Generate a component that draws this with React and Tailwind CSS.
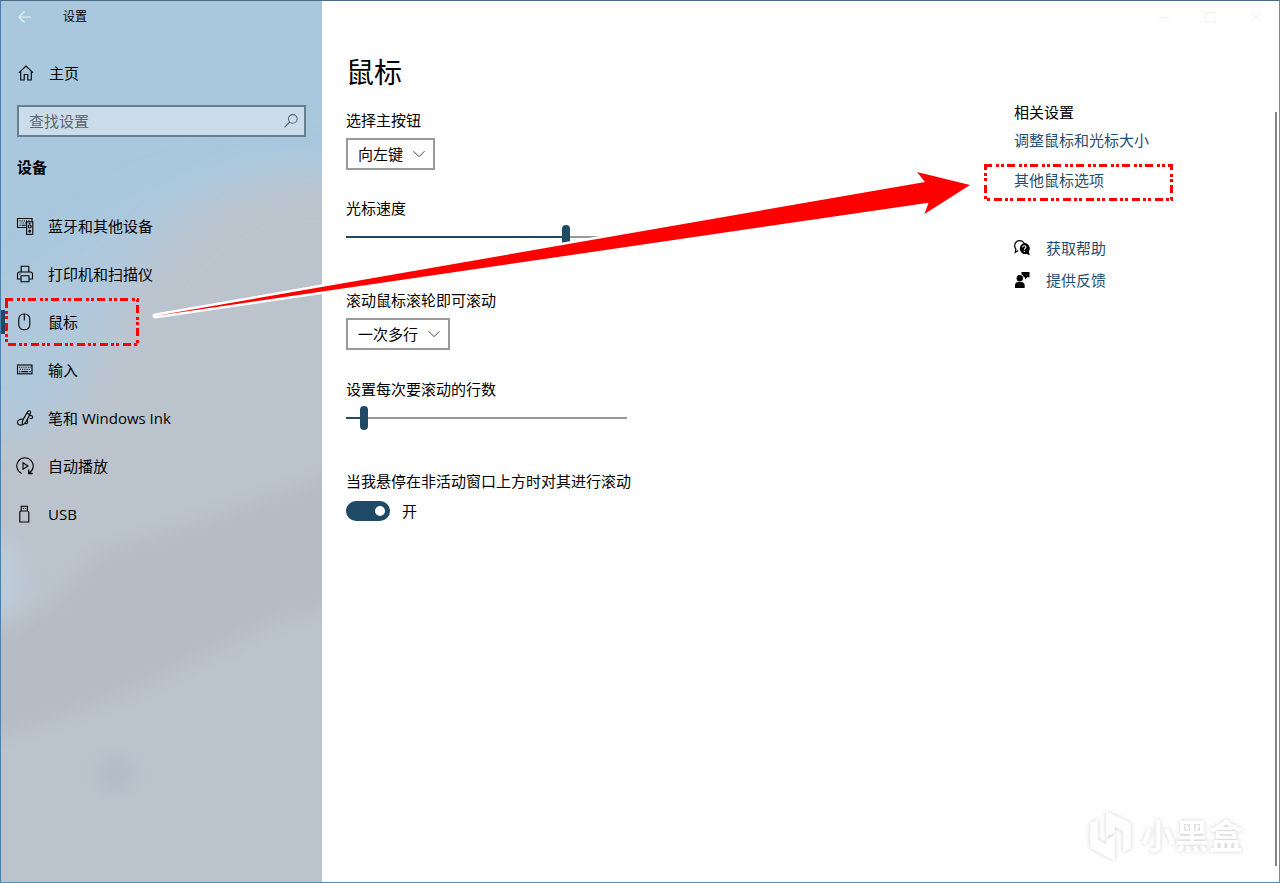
import { useState } from 'react';

const stroke = {
  fill: 'none',
  stroke: 'currentColor',
  strokeWidth: 1.1,
  viewBox: '0 0 18 18',
  className: 'h-[18px] w-[18px] shrink-0',
  'aria-hidden': true,
};

const HomeIcon = () => (
  <svg {...stroke}>
    <path d="M1.8 8.8 9 2l7.200 6.800M3.700 7.200V16h3.500v-5.500h3.600V16h3.500V7.200" />
  </svg>
);
const DevicesIcon = () => (
  <svg {...stroke}>
    <path d="M10.300 10.500H1.500V1.500H16v3" />
    <path d="M3.500 3.900h1M5.700 3.900h1M7.900 3.900h1M10.100 3.900h1M12.300 3.900h1M4.500 6h1M6.700 6h1M8.900 6h1M3.500 8.200h1.200M5.700 8.200h4" />
    <rect x="10.600" y="4.800" width="6.200" height="12.600" />
    <circle cx="13.700" cy="9.500" r="1.500" />
    <circle cx="13.700" cy="14.300" r=".9" />
    <path d="M12.800 6.600h1.800" />
  </svg>
);
const PrinterIcon = () => (
  <svg {...stroke}>
    <path d="M5.200 6.800V1.200h7.600v5.600M5 14H1.500V9.200c0-1.300.8-2.200 2.100-2.200h10.800c1.300 0 2.100.9 2.100 2.200V14H13" />
    <path d="M5 10.700h8v6.100H5zM3.400 9h1.200" />
  </svg>
);
const MouseIcon = () => (
  <svg {...stroke}>
    <rect x="2.800" y="1" width="11" height="15.800" rx="5" />
    <path d="M8.300 1v6.500" />
  </svg>
);
const KeyboardIcon = () => (
  <svg {...stroke}>
    <rect x="1.500" y="4" width="14.500" height="8.800" />
    <path d="M3 6.300h1M5.200 6.300h1M7.400 6.300h1M9.600 6.300h1M11.800 6.300h1M13.700 6.300h1M4 8.400h1M6.200 8.400h1M8.400 8.400h1M10.600 8.400h1M12.800 8.400h1M3 10.600h1.300M5.400 10.600h6.800M13.400 10.600h1.300" />
  </svg>
);
const PenIcon = () => (
  <svg {...stroke}>
    <path d="M6.400 15.800C5.900 13.500 6.500 11.600 7.600 9.600L11.600 2.700C12.400 1.300 14.800 1.500 14.600 3.300 14.300 5.400 10.300 12.300 9.300 13.700 8.500 14.800 7.400 15.500 6.400 15.800zM10.900 4 13.400 5.500" />
    <path d="M6.900 10.300C4.300 9.600 1.400 11 1.400 13.500c0 2.300 2.600 3.100 5 2.300M9.300 13.700c.3 1.500 1.700 1.300 2.200.1.500-1.300-.2-2.600 0-4M13 6.600c1.800-.4 3.900.4 3.700 1.800-.2 1.200-1.900 1.400-3 .9" />
  </svg>
);
const AutoPlayIcon = () => (
  <svg {...stroke}>
    <path d="M5.600 16.400A8.200 8.200 0 1 1 13 16.100" />
    <path d="M12.700 12.600v3.900h3.900" strokeWidth="1.300" />
    <path d="M7 5.800v6.400L12 9z" />
  </svg>
);
const UsbIcon = () => (
  <svg {...stroke}>
    <path d="M5.200 6V1.200h6.200V6M6.900 3.400h.9M8.900 3.400h.9" />
    <path d="M5 6h6.600c.7 0 1.200.5 1.200 1.200V17h-9V7.200C3.800 6.500 4.300 6 5 6z" />
  </svg>
);

const NAV = [
  { label: '蓝牙和其他设备', Icon: DevicesIcon },
  { label: '打印机和扫描仪', Icon: PrinterIcon },
  { label: '鼠标', Icon: MouseIcon, current: true },
  { label: '输入', Icon: KeyboardIcon },
  { label: '笔和 Windows Ink', Icon: PenIcon },
  { label: '自动播放', Icon: AutoPlayIcon },
  { label: 'USB', Icon: UsbIcon },
];

function Callout({ width, height, className }) {
  return (
    <svg className={`pointer-events-none absolute ${className}`} width={width} height={height} aria-hidden="true">
      <path
        d={`M0 1.500H${width - 1.5}V${height - 1.5}H1.500V0`}
        fill="none"
        stroke="#ff0000"
        strokeWidth="3"
        strokeDasharray="8 4 3 2 3 3"
      />
    </svg>
  );
}

function Wallpaper() {
  return (
    <svg className="absolute inset-0 h-full w-full" viewBox="0 0 322 883" preserveAspectRatio="none" aria-hidden="true">
      <defs>
        <filter id="soft" x="-150%" y="-150%" width="400%" height="400%">
          <feGaussianBlur stdDeviation="10" />
        </filter>
        <filter id="softer" x="-50%" y="-50%" width="200%" height="200%">
          <feGaussianBlur stdDeviation="18" />
        </filter>
      </defs>
      <rect width="322" height="883" fill="#a9c8dd" />
      <path d="M-60 330 60 260 150 200 240 175 380 165V950H-60z" fill="#b0c8dc" filter="url(#softer)" />
      <path d="M370 175 300 178 250 183 190 215 140 270 105 330 80 385 60 420 20 432-60 430V960H370z" fill="#bbc4cd" filter="url(#softer)" />
      <path d="M400 440 300 485 200 520 90 555 50 605-60 650V755L40 725 120 698 190 665 280 622 400 590z" fill="#b6bcc6" filter="url(#soft)" />
      <ellipse cx="5" cy="580" rx="18" ry="40" fill="#bdcad8" filter="url(#soft)" />
      <circle cx="115" cy="774" r="16" fill="#aeb8c4" opacity=".8" filter="url(#soft)" />
    </svg>
  );
}

function Sidebar() {
  return (
    <aside className="relative w-[322px] shrink-0 overflow-hidden border-l border-[#4a7fae]">
      <Wallpaper />
      <div className="relative">
        <div className="flex h-8 items-center pl-4">
          <button type="button" aria-label="返回" className="text-[#e4eef5]">
            <svg width="16" height="16" viewBox="0 0 16 16" fill="none" stroke="currentColor" strokeWidth="1.200" aria-hidden="true">
              <path d="M14 8H2M7.500 2.500 2 8l5.500 5.500" />
            </svg>
          </button>
          <span className="ml-[30px] text-xs">设置</span>
        </div>
        <a href="#home" className="mt-4 flex h-12 items-center gap-[14px] pl-4">
          <HomeIcon />
          <span>主页</span>
        </a>
        <div className="mx-4 mt-2 flex h-8 items-center border-2 border-[#66808f] bg-[#cbddea]">
          <input
            type="search"
            aria-label="查找设置"
            placeholder="查找设置"
            className="h-full min-w-0 flex-1 bg-transparent pl-[10px] outline-none placeholder:text-[#5b6871]"
          />
          <svg width="16" height="16" viewBox="0 0 16 16" fill="none" stroke="#56646e" strokeWidth="1.100" className="mr-[5px]" aria-hidden="true">
            <circle cx="9.800" cy="5.900" r="4.300" />
            <path d="M6.700 9 1.500 14.300" />
          </svg>
        </div>
        <h2 className="mt-[14px] pl-4 leading-8 font-bold">设备</h2>
        <nav className="mt-[19px]">
          {NAV.map(({ label, Icon, current }) => (
            <a
              key={label}
              href="#device"
              aria-current={current ? 'page' : undefined}
              className="relative flex h-12 items-center gap-[14px] pl-[15px]"
            >
              {current && <span className="absolute top-3 left-0 h-6 w-1 bg-[#1d4a68]" />}
              <Icon />
              <span>{label}</span>
              {current && <Callout width={134} height={48} className="top-0 left-1" />}
            </a>
          ))}
        </nav>
      </div>
    </aside>
  );
}

function Dropdown({ id, label, options }) {
  return (
    <div>
      <label htmlFor={id} className="block leading-5">{label}</label>
      <div className="relative mt-2 w-fit">
        <select id={id} className="block h-8 appearance-none border-2 border-[#999999] bg-white pr-[29px] pl-[10px]">
          {options.map((option) => (
            <option key={option}>{option}</option>
          ))}
        </select>
        <svg
          width="12" height="12" viewBox="0 0 12 12" fill="none" stroke="#444" strokeWidth="1"
          className="pointer-events-none absolute top-[10px] right-[10px]" aria-hidden="true"
        >
          <path d="M.5 3.200 6 8.700l5.500-5.500" />
        </svg>
      </div>
    </div>
  );
}

function Slider({ id, label, initial }) {
  const [value, setValue] = useState(initial);
  return (
    <div>
      <label htmlFor={id} className="block leading-5">{label}</label>
      <input
        id={id}
        type="range"
        min="0"
        max="100"
        value={value}
        onChange={(event) => setValue(Number(event.target.value))}
        style={{ '--fill': `${value}%` }}
        className="mt-[7px] block h-6 w-[281px] max-w-full appearance-none bg-transparent [&::-webkit-slider-runnable-track]:h-[2px] [&::-webkit-slider-runnable-track]:bg-[linear-gradient(to_right,#1f4a66_var(--fill),#999999_var(--fill))] [&::-webkit-slider-thumb]:-mt-[11px] [&::-webkit-slider-thumb]:h-6 [&::-webkit-slider-thumb]:w-2 [&::-webkit-slider-thumb]:appearance-none [&::-webkit-slider-thumb]:rounded-full [&::-webkit-slider-thumb]:bg-[#1f4a66]"
      />
    </div>
  );
}

function WindowControls() {
  const button = 'flex h-8 w-[46px] items-center justify-center text-[#f1f1f1]';
  const icon = { width: 12, height: 12, viewBox: '0 0 12 12', fill: 'none', stroke: 'currentColor', 'aria-hidden': true };
  return (
    <div className="flex justify-end">
      <button type="button" aria-label="最小化" className={button}>
        <svg {...icon}><path d="M1 6.500h10" /></svg>
      </button>
      <button type="button" aria-label="最大化" className={button}>
        <svg {...icon}><path d="M1 1.500h10v9.500H1z" /></svg>
      </button>
      <button type="button" aria-label="关闭" className={button}>
        <svg {...icon}><path d="m1 1 10 10M11 1 1 11" /></svg>
      </button>
    </div>
  );
}

function RelatedLinks() {
  return (
    <aside className="w-[261px] shrink-0 pt-[69px] leading-5 text-[#1f4e6e]">
      <h2 className="text-black">相关设置</h2>
      <a href="#size" className="mt-2 block">调整鼠标和光标大小</a>
      <div className="relative mt-5">
        <a href="#more">其他鼠标选项</a>
        <Callout width={189} height={37} className="-top-[6px] -left-[30px]" />
      </div>
      <a href="#help" className="mt-12 flex items-center gap-4">
        <svg width="16" height="18" viewBox="0 0 16 18" aria-hidden="true">
          <path d="M4.200 11.500 1.300 13.500l.6-3.400A5 5 0 0 1 .7 6.500C.7 3.700 3 1.600 5.700 1.600c2 0 3.600 1 4.400 2.600" fill="none" stroke="#000" strokeWidth="1.200" />
          <path d="M10.300 4a5.500 5.500 0 0 1 4.500 8.600l1 3.600-3.300-1.200A5.500 5.500 0 1 1 10.300 4z" fill="#000" />
          <path d="M8.700 8.200c0-2 3.200-1.900 3.200 0 0 1.200-1.600 1.200-1.600 2.500M10.300 11.700v1.200" fill="none" stroke="#fff" strokeWidth="1.100" />
        </svg>
        <span>获取帮助</span>
      </a>
      <a href="#feedback" className="mt-3 flex items-center gap-4">
        <svg width="16" height="18" viewBox="0 0 16 18" aria-hidden="true">
          <circle cx="5.800" cy="7.200" r="3.200" />
          <path d="M1 17v-2.500C1 12.300 2.600 11 4.400 11h2.900c1.800 0 3.400 1.300 3.400 3.500V17zM7.500 1H15.500v5.300h-2.200L11 8.600V6.300H9.800A4.400 4.400 0 0 0 7.500 3.200z" />
        </svg>
        <span>提供反馈</span>
      </a>
    </aside>
  );
}

function PointerArrow() {
  return (
    <svg className="pointer-events-none absolute top-[158px] left-[145px]" width="835" height="170" viewBox="145 160 835 170" aria-hidden="true">
      <path d="M155 317 925 183l-8-10 53 13-45.500 29 4-11.300z" fill="#fff" stroke="#fff" strokeWidth="5" strokeLinejoin="round" />
      <path d="M155 317 925 183l-8-10 53 13-45.500 29 4-11.300z" fill="#ff0000" />
    </svg>
  );
}

function Watermark() {
  return (
    <div className="pointer-events-none absolute right-9 bottom-5 flex items-center gap-2 text-[34px] leading-[52px] font-bold text-white [filter:drop-shadow(0_0_2px_rgba(0,0,0,0.18))]">
      <svg width="43" height="52" viewBox="0 0 43 52" fill="#fff" aria-hidden="true">
        <path d="M0 13l8-4v21l8 4v-4l9-5v26L0 38zM16 1l25 12v25l-8 4V21l-8-4v5l-9 5z" />
      </svg>
      <span>小黑盒</span>
    </div>
  );
}

export default function App() {
  const [hoverScroll, setHoverScroll] = useState(true);
  return (
    <div className="relative flex min-h-screen overflow-hidden border-t border-r border-b border-t-[#4a6a88] border-r-[#5a94bf] border-b-[#4f8fc0] bg-white font-['Open_Sans','Noto_Sans_CJK_SC',sans-serif] text-[15px] text-black">
      <Sidebar />
      <div className="flex min-w-0 flex-1 flex-col">
        <WindowControls />
        <div className="flex flex-1 justify-between">
          <main className="min-w-0 pt-[19px] pl-6">
            <h1 className="text-[28px] leading-10">鼠标</h1>
            <form className="mt-[18px]">
              <Dropdown id="primary" label="选择主按钮" options={['向左键', '向右键']} />
              <div className="mt-7">
                <Slider id="speed" label="光标速度" initial={79} />
              </div>
              <div className="mt-[41px]">
                <Dropdown id="wheel" label="滚动鼠标滚轮即可滚动" options={['一次多行', '一次一屏']} />
              </div>
              <div className="mt-[29px]">
                <Slider id="lines" label="设置每次要滚动的行数" initial={5} />
              </div>
              <div className="mt-[41px]">
                <label htmlFor="hover" className="block leading-5">当我悬停在非活动窗口上方时对其进行滚动</label>
                <div className="mt-2 flex h-6 items-center gap-3">
                  <span className="relative flex">
                    <input
                      id="hover"
                      type="checkbox"
                      role="switch"
                      checked={hoverScroll}
                      onChange={(event) => setHoverScroll(event.target.checked)}
                      className="peer h-5 w-11 appearance-none rounded-full bg-[#999999] checked:bg-[#1f4a66]"
                    />
                    <span className="pointer-events-none absolute top-[5px] left-[5px] h-[10px] w-[10px] rounded-full bg-white peer-checked:left-[29px]" />
                  </span>
                  <span>{hoverScroll ? '开' : '关'}</span>
                </div>
              </div>
            </form>
          </main>
          <div className="flex">
            <RelatedLinks />
            <div className="mt-[79px] mr-[2px] mb-4 w-[2px] bg-[#858585]" />
          </div>
        </div>
      </div>
      <PointerArrow />
      <Watermark />
    </div>
  );
}
